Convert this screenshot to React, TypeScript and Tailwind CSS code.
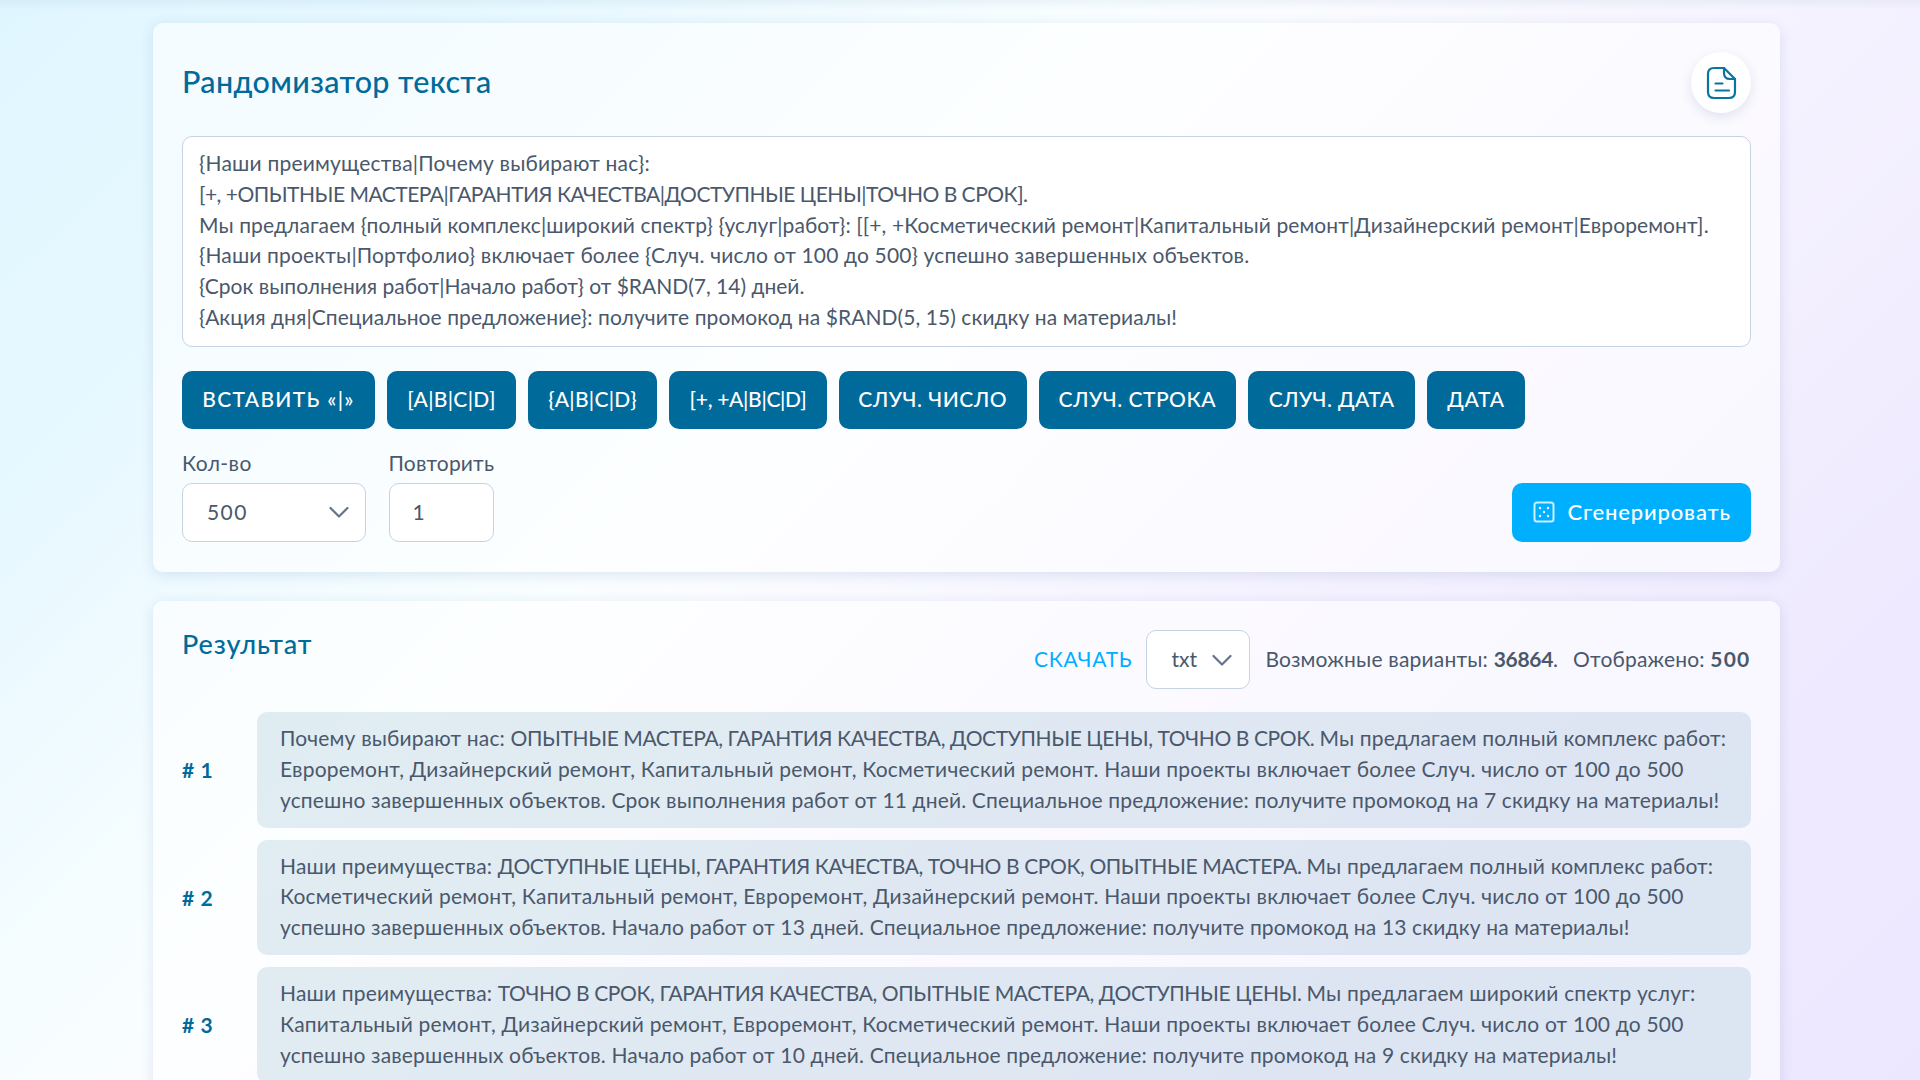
type Result = { intro: string; caps: string; offer: string; middle: string; ending: string };

const snippets = [
  { label: 'ВСТАВИТЬ «|»', size: 'w-[193px] tracking-[1.3px]' },
  { label: '[A|B|C|D]', size: 'w-[129px] tracking-[0.3px]' },
  { label: '{A|B|C|D}', size: 'w-[129px] tracking-[0.3px]' },
  { label: '[+, +A|B|C|D]', size: 'w-[158px] tracking-[-0.3px]' },
  { label: 'СЛУЧ. ЧИСЛО', size: 'w-[187.5px] tracking-[0.5px]' },
  { label: 'СЛУЧ. СТРОКА', size: 'w-[197.5px] tracking-[0.5px]' },
  { label: 'СЛУЧ. ДАТА', size: 'w-[167px] tracking-[0.4px]' },
  { label: 'ДАТА', size: 'w-[98px] tracking-[0.7px]' },
];

const template = [
  { text: '{Наши преимущества|Почему выбирают нас}:', tracking: 'tracking-[0.2px]' },
  { text: '[+, +ОПЫТНЫЕ МАСТЕРА|ГАРАНТИЯ КАЧЕСТВА|ДОСТУПНЫЕ ЦЕНЫ|ТОЧНО В СРОК].', tracking: 'tracking-[-0.5px]' },
  {
    text: 'Мы предлагаем {полный комплекс|широкий спектр} {услуг|работ}: [[+, +Косметический ремонт|Капитальный ремонт|Дизайнерский ремонт|Евроремонт].',
    tracking: 'tracking-[0.09px]',
  },
  {
    text: '{Наши проекты|Портфолио} включает более {Случ. число от 100 до 500} успешно завершенных объектов.',
    tracking: 'tracking-[0.15px]',
  },
  { text: '{Срок выполнения работ|Начало работ} от $RAND(7, 14) дней.', tracking: 'tracking-[0px]' },
  {
    text: '{Акция дня|Специальное предложение}: получите промокод на $RAND(5, 15) скидку на материалы!',
    tracking: 'tracking-[0.067px]',
  },
];

const results: Result[] = [
  {
    intro: 'Почему выбирают нас: ',
    caps: 'ОПЫТНЫЕ МАСТЕРА, ГАРАНТИЯ КАЧЕСТВА, ДОСТУПНЫЕ ЦЕНЫ, ТОЧНО В СРОК. ',
    offer: 'Мы предлагаем полный комплекс работ:',
    middle: 'Евроремонт, Дизайнерский ремонт, Капитальный ремонт, Косметический ремонт. Наши проекты включает более Случ. число от 100 до 500',
    ending: 'успешно завершенных объектов. Срок выполнения работ от 11 дней. Специальное предложение: получите промокод на 7 скидку на материалы!',
  },
  {
    intro: 'Наши преимущества: ',
    caps: 'ДОСТУПНЫЕ ЦЕНЫ, ГАРАНТИЯ КАЧЕСТВА, ТОЧНО В СРОК, ОПЫТНЫЕ МАСТЕРА. ',
    offer: 'Мы предлагаем полный комплекс работ:',
    middle: 'Косметический ремонт, Капитальный ремонт, Евроремонт, Дизайнерский ремонт. Наши проекты включает более Случ. число от 100 до 500',
    ending: 'успешно завершенных объектов. Начало работ от 13 дней. Специальное предложение: получите промокод на 13 скидку на материалы!',
  },
  {
    intro: 'Наши преимущества: ',
    caps: 'ТОЧНО В СРОК, ГАРАНТИЯ КАЧЕСТВА, ОПЫТНЫЕ МАСТЕРА, ДОСТУПНЫЕ ЦЕНЫ. ',
    offer: 'Мы предлагаем широкий спектр услуг:',
    middle: 'Капитальный ремонт, Дизайнерский ремонт, Евроремонт, Косметический ремонт. Наши проекты включает более Случ. число от 100 до 500',
    ending: 'успешно завершенных объектов. Начало работ от 10 дней. Специальное предложение: получите промокод на 9 скидку на материалы!',
  },
];

const FileIcon = () => (
  <svg width="32" height="34" viewBox="0 0 32 34" fill="none" stroke="#0a73a3" strokeWidth="2.2" strokeLinecap="round" strokeLinejoin="round">
    <path d="M19 2H9C5 2 3 4 3 8v18c0 4 2 6 6 6h15c4 0 6-2 6-6V13Z" />
    <path d="M19 2v5c0 4 2 6 6 6h5" />
    <path d="M10.500 17.500h7M10.500 24.500h13.500" />
  </svg>
);

const DiceIcon = () => (
  <svg width="22" height="22" viewBox="0 0 22 22" fill="none" stroke="white" strokeOpacity="0.8" strokeWidth="2">
    <rect x="1.5" y="1.5" width="19" height="19" rx="2.5" />
    <g fill="white" stroke="none">
      <circle cx="7" cy="7" r="1.2" />
      <circle cx="15" cy="7" r="1.2" />
      <circle cx="11" cy="11" r="1.2" />
      <circle cx="7" cy="15" r="1.2" />
      <circle cx="15" cy="15" r="1.2" />
    </g>
  </svg>
);

const Chevron = () => (
  <svg width="20" height="12" viewBox="0 0 20 12" fill="none" stroke="#64748b" strokeWidth="2.2" strokeLinecap="round" strokeLinejoin="round">
    <path d="M1.5 2 10 10.500 18.500 2" />
  </svg>
);

const App = () => {
  return (
    <div className="relative h-[1080px] overflow-hidden bg-[linear-gradient(135deg,#e0f6ff_0%,#e6f8ff_16%,#eefaff_25%,#f8feff_37%,#fbfcff_43%,#f4f1ff_64%,#efeafe_82%,#ece7fe_100%)] pl-[152.5px] pt-[23px] font-['Lato',sans-serif] text-[21px] text-[#4a586c]">
      <div className="absolute inset-x-0 top-0 h-[10px] bg-linear-to-b from-[#0c4a6e]/5 to-transparent"></div>

      <div className="flex h-[548.5px] w-[1627.5px] flex-col rounded-[10px] bg-white/60 px-[29.5px] pt-[29px] shadow-[0_3px_14px_rgba(30,80,140,0.13)]">
        <div className="flex items-center justify-between">
          <h1 className="pb-[2px] text-[30.5px] font-medium tracking-[0.35px] text-[#006b9b]">Рандомизатор текста</h1>
          <button className="flex h-[61px] w-[60px] items-center justify-center rounded-full bg-white shadow-[0_4px_12px_rgba(30,60,120,0.12)]">
            <FileIcon />
          </button>
        </div>

        <div className="mt-[23px] h-[211px] rounded-[10px] border border-[#c6d3e3] bg-white px-4 pt-[11px] leading-[30.75px] whitespace-nowrap">
          {template.map((line) => (
            <div key={line.text} className={line.tracking}>{line.text}</div>
          ))}
        </div>

        <div className="mt-[23.5px] flex gap-[12px]">
          {snippets.map((item) => (
            <button key={item.label} className={`flex h-[58.5px] items-center justify-center rounded-[10px] bg-[#006a9b] pb-[2px] font-medium whitespace-nowrap text-white ${item.size}`}>
              {item.label}
            </button>
          ))}
        </div>

        <div className="mt-[18px] flex items-end">
          <label className="mr-[22.5px] flex w-[184px] flex-col leading-[31px] tracking-[0.4px]">
            Кол-во
            <div className="mt-[5px] flex h-[58.5px] items-center justify-between rounded-[10px] border border-[#c6d3e3] bg-white pr-4 pl-6">
              <span className="pb-[2px] tracking-[1.4px]">500</span>
              <Chevron />
            </div>
          </label>
          <label className="flex w-[105.5px] flex-col leading-[31px] tracking-[0.2px]">
            Повторить
            <div className="mt-[5px] flex h-[58.5px] items-center rounded-[10px] border border-[#c6d3e3] bg-white pb-[2px] pl-[23px]">1</div>
          </label>
          <button className="ml-auto flex h-[58.5px] w-[239px] items-center rounded-[10px] bg-[#00b0ff] pl-[21px] font-medium text-white">
            <DiceIcon />
            <span className="ml-[13px] pb-px text-[22px] tracking-[0.85px]">Сгенерировать</span>
          </button>
        </div>
      </div>

      <div className="mt-[29px] h-[700px] w-[1627.5px] rounded-[10px] bg-white/60 px-[29.5px] pt-[29.5px] shadow-[0_3px_14px_rgba(30,80,140,0.13)]">
        <div className="flex items-start">
          <h2 className="-mt-px text-[27px] leading-[29px] font-medium tracking-[0.95px] text-[#006b9b]">Результат</h2>
          <div className="ml-auto flex h-[59px] items-center">
            <a className="pb-[2px] tracking-[0.8px] text-[#00aeff]" href="#">СКАЧАТЬ</a>
            <div className="mr-[15px] ml-[14px] flex h-[59px] w-[104px] items-center justify-between rounded-[10px] border border-[#c6d3e3] bg-white pr-[17px] pl-6">
              <span className="pb-[2px]">txt</span>
              <Chevron />
            </div>
            <span className="mr-[15px] pb-[2px]">
              <span className="tracking-[0.2px]">Возможные варианты: </span>
              <b className="tracking-[-0.3px]">36864</b>.
            </span>
            <span className="pb-[2px]">
              <span className="tracking-[0.2px]">Отображено: </span>
              <b className="tracking-[1.2px]">500</b>
            </span>
          </div>
        </div>

        <div className="mt-[23px] flex flex-col gap-[12px]">
          {results.map((result, index) => (
            <div key={index} className="flex h-[115.5px] items-center">
              <div className="w-[75px] shrink-0 font-bold tracking-[0.6px] text-[#006b9b]"># {index + 1}</div>
              <div className="h-full flex-1 rounded-[10px] bg-[#035a8c]/11 px-[23px] pt-[11px] leading-[30.75px] whitespace-nowrap">
                <div className="tracking-[0.17px]">
                  {result.intro}
                  <span className="tracking-[-0.4px]">{result.caps}</span>
                  {result.offer}
                </div>
                <div className="tracking-[0.21px]">{result.middle}</div>
                <div className="tracking-[0.155px]">{result.ending}</div>
              </div>
            </div>
          ))}
        </div>
      </div>
    </div>
  );
};

export default App;
